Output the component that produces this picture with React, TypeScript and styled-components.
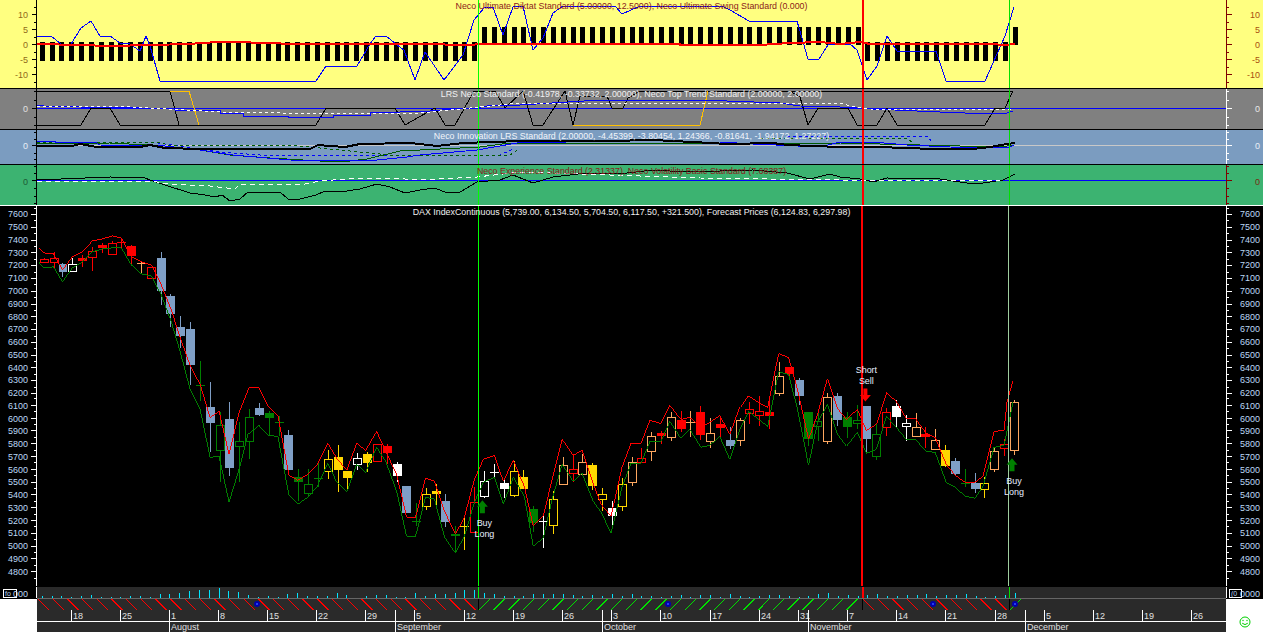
import React from "react";
import styled, { createGlobalStyle } from "styled-components";

const GlobalStyle = createGlobalStyle`
  html, body {
    margin: 0;
    padding: 0;
    background: #000;
    overflow: hidden;
  }
  svg text {
    font-family: "Liberation Sans", Arial, sans-serif;
    font-size: 9px;
  }
`;

const Page = styled.div`
  display: flex;
  flex-direction: column;
  width: 1263px;
  height: 632px;
  font-family: "Liberation Sans", Arial, sans-serif;
`;

const Pane = styled.section<{ $height: number; $bg: string; $edge: string }>`
  display: grid;
  grid-template-columns: 37px 1fr 37px;
  height: ${({ $height }) => $height}px;
  box-sizing: border-box;
  flex: none;
  background: ${({ $bg }) => $bg};
  border-bottom: 1px solid ${({ $edge }) => $edge};
`;

const Plot = styled.div`
  position: relative;
  min-width: 0;
  overflow: hidden;
`;

const Title = styled.div<{ $color: string; $top: number }>`
  position: absolute;
  top: ${({ $top }) => $top}px;
  left: 0;
  right: 0;
  text-align: center;
  font-size: 8.85px;
  line-height: 11px;
  white-space: nowrap;
  color: ${({ $color }) => $color};
`;

const Drawing = styled.svg`
  display: block;
  width: 100%;
  height: 100%;
`;

const Timeline = styled.section`
  display: grid;
  grid-template-columns: 37px 1fr 37px;
  grid-template-rows: 12px 11px 12px 10px;
  flex: none;
  background: #2a2a2a;
`;

const BlackCell = styled.div<{ $col: number }>`
  grid-column: ${({ $col }) => $col};
  grid-row: 1;
  background: #000;
`;

const WhiteCorner = styled.div<{ $col: number }>`
  grid-column: ${({ $col }) => $col};
  grid-row: 2 / span 3;
  background: #fff;
  display: flex;
  align-items: flex-end;
  justify-content: center;
  padding-bottom: 4px;
  box-sizing: border-box;
`;

const Strip = styled.div<{ $row: number; $line?: string }>`
  grid-column: 2;
  grid-row: ${({ $row }) => $row};
  min-width: 0;
  box-sizing: border-box;
  border-bottom: ${({ $line }) => ($line ? `1px solid ${$line}` : "none")};
`;

const TinyText = styled.text`
  && {
    font-size: 7px;
  }
`;

const LEFT = 37;
const PLOT_W = 1189;
const barX = (i: number) => Math.round(41.7 + 9.83 * i) + 0.5;

type Pt = [number, number];

const pts = (list: Pt[]) => list.map((p) => p.join(",")).join(" ");

const Trace = ({
  points,
  color,
  width = 1,
  dash,
}: {
  points: Pt[];
  color: string;
  width?: number;
  dash?: string;
}) => (
  <polyline
    points={pts(points)}
    fill="none"
    stroke={color}
    strokeWidth={width}
    strokeDasharray={dash}
    shapeRendering="crispEdges"
  />
);

const Markers = ({ top, bottom, late = "#00e000" }: { top: number; bottom: number; late?: string }) => (
  <g shapeRendering="crispEdges">
    <line x1={478.5} x2={478.5} y1={top} y2={bottom} stroke="#00ff00" />
    <line x1={863} x2={863} y1={top} y2={bottom} stroke="#ff0000" strokeWidth={2} />
    <line x1={1009.5} x2={1009.5} y1={top} y2={bottom} stroke={late} />
  </g>
);

type AxisProps = {
  side: "left" | "right";
  top: number;
  height: number;
  color: string;
  labelColor: string;
  labels: { y: number; text: string }[];
  ticks: { y: number; major?: boolean }[];
};

const Axis = ({ side, top, height, color, labelColor, labels, ticks }: AxisProps) => {
  const left = side === "left";
  const lineX = left ? 36.5 : 1226.5;
  const dir = left ? -1 : 1;
  const minX = left ? 0 : 1226;
  return (
    <Drawing viewBox={`${minX} ${top} 37 ${height}`}>
      <g shapeRendering="crispEdges" stroke={color}>
        <line x1={lineX} x2={lineX} y1={top} y2={top + height} />
        {ticks.map((t) => (
          <line
            key={t.y}
            x1={lineX}
            x2={lineX + dir * (t.major ? 5 : 2.5)}
            y1={Math.round(t.y) + 0.5}
            y2={Math.round(t.y) + 0.5}
          />
        ))}
      </g>
      {labels.map((l) => (
        <text
          key={l.text}
          x={left ? 28 : 1260}
          y={l.y + 3.5}
          textAnchor="end"
          fill={labelColor}
        >
          {l.text}
        </text>
      ))}
    </Drawing>
  );
};

// yellow pane
const yellowLabels = [
  { y: 14, text: "10" },
  { y: 29, text: "5" },
  { y: 44, text: "0" },
  { y: 59, text: "-5" },
  { y: 74, text: "-10" },
];
const yellowTicks = Array.from({ length: 12 }, (_, i) => ({ y: 6.5 + i * 7.5, major: i % 2 === 1 }));

const swing: Pt[] = [
  [37, 36], [51, 36], [61, 44], [71, 44], [81, 28], [91, 21], [100, 36], [110, 36], [120, 43],
  [130, 44], [140, 51], [146, 36], [150, 46], [160, 81], [316, 81], [326, 66], [357, 66], [370, 44],
  [376, 36], [386, 36], [396, 44], [404, 50], [415, 80], [425, 52], [444, 80], [463, 55], [474, 20],
  [484, 8], [493, 7], [503, 35], [513, 7], [523, 6], [533, 50], [543, 38], [553, 13], [563, 6],
  [615, 6], [622, 14], [640, 6], [722, 6], [730, 10], [749, 21], [797, 21], [808, 59], [819, 59],
  [828, 45], [850, 44], [857, 50], [867, 80], [877, 66], [887, 36], [897, 51], [936, 51], [946, 81],
  [985, 81], [1005, 36], [1014, 7],
];
const diktat: Pt[] = [
  [37, 44], [80, 45], [110, 46], [150, 45], [190, 44], [200, 43], [220, 42], [240, 42], [262, 43],
  [300, 44], [420, 44], [470, 45], [480, 44], [680, 44], [680, 45], [700, 45], [760, 45], [790, 43],
  [820, 42], [840, 44], [860, 42], [870, 44], [990, 44], [1005, 45], [1015, 44],
];

// grey pane
const grayLabels = [{ y: 108.5, text: "0" }];
const grayTicks = [
  { y: 91 }, { y: 100 }, { y: 108, major: true }, { y: 117 }, { y: 125 },
];
const topTrendA: Pt[] = [
  [37, 125], [81, 125], [91, 108], [110, 108], [120, 125], [316, 125], [326, 108], [395, 108],
  [405, 125], [435, 108], [445, 125], [455, 125], [474, 91], [495, 91], [505, 108], [523, 91],
  [533, 125], [543, 125], [565, 91], [573, 125], [580, 96], [607, 96], [612, 108], [623, 108],
  [628, 98], [640, 91], [708, 91], [790, 91], [800, 97], [808, 125], [818, 108], [848, 108],
  [857, 125], [877, 125], [887, 108], [897, 125], [985, 125], [995, 108], [1005, 108], [1013, 91],
];
const topTrendB: Pt[] = [[37, 91], [170, 91], [179, 125]];
const topTrendC: Pt[] = [[708, 91], [1013, 91]];
const topGold: Pt[] = [[170, 91], [189, 91], [199, 125]];
const topGold2: Pt[] = [[573, 125], [700, 125], [708, 91]];
const lrsBlue: Pt[] = [
  [37, 105], [44, 106], [80, 107], [140, 108], [174, 108], [175, 110], [220, 110], [220, 113],
  [243, 113], [243, 116], [288, 116], [288, 117], [333, 117], [333, 115], [370, 115], [370, 113],
  [430, 111], [455, 109], [475, 108], [487, 106], [520, 105], [600, 100], [700, 100], [780, 103],
  [800, 106], [840, 107], [873, 109], [917, 111], [940, 112], [965, 113], [1007, 113], [1013, 111],
];
const lrsDash: Pt[] = [
  [37, 106], [130, 107], [150, 108], [220, 112], [280, 113], [420, 113], [470, 108], [520, 103],
  [800, 103], [840, 103], [850, 106], [870, 109], [1013, 110],
];

// blue pane
const blueLabels = [{ y: 145.5, text: "0" }];
const blueTicks = [{ y: 132 }, { y: 139 }, { y: 145, major: true }, { y: 153 }, { y: 159 }];
const innoBlack: Pt[] = [
  [37, 146], [72, 146], [80, 144], [97, 147], [140, 147], [150, 145], [165, 148], [200, 149],
  [310, 149], [318, 145], [330, 146], [345, 147], [360, 144], [410, 143], [420, 144], [437, 146],
  [463, 143], [520, 141], [607, 141], [653, 140], [693, 142], [727, 144], [773, 143], [787, 145],
  [840, 147], [873, 147], [910, 148], [930, 149], [973, 149], [990, 147], [1007, 144], [1015, 143],
];
const innoBlue: Pt[] = [
  [37, 141], [55, 141], [55, 142], [95, 142], [100, 145], [165, 146], [200, 150], [233, 155],
  [290, 160], [367, 161], [407, 157], [420, 155], [477, 150], [517, 143], [567, 142], [720, 142],
  [753, 144], [820, 147], [840, 142], [873, 142], [907, 145], [950, 147], [1007, 148], [1014, 145],
];
const innoGreen: Pt[] = [
  [37, 144], [110, 143], [165, 146], [200, 150], [230, 155], [270, 158], [320, 161], [350, 161],
  [367, 159], [400, 151], [420, 150], [480, 147], [510, 143], [560, 143], [700, 143], [840, 143],
  [1000, 147], [1014, 145],
];
const innoDashBlue: Pt[] = [
  [37, 143], [150, 142], [165, 144], [200, 149], [220, 152], [260, 155], [500, 155], [515, 148],
];
const innoDashBlue2: Pt[] = [[787, 136], [927, 136], [933, 143]];
const innoDashGreen: Pt[] = [
  [37, 142], [160, 142], [167, 145], [300, 146], [350, 151], [400, 156], [510, 155], [520, 148],
];
const innoDashGreen2: Pt[] = [[760, 138], [907, 138], [913, 143]];

// green pane
const greenLabels = [{ y: 181, text: "0" }];
const greenTicks = [
  { y: 166 }, { y: 173 }, { y: 180, major: true }, { y: 188 }, { y: 196 }, { y: 203 },
];
const experience: Pt[] = [
  [37, 180], [85, 178], [110, 177], [145, 178], [150, 180], [165, 185], [190, 193], [205, 195],
  [215, 197], [222, 195], [230, 201], [240, 199], [248, 192], [280, 192], [288, 199], [300, 199],
  [316, 195], [325, 191], [340, 192], [360, 189], [377, 184], [390, 187], [405, 193], [420, 190],
  [435, 188], [447, 193], [460, 192], [477, 182], [500, 180], [513, 175], [533, 183], [553, 177],
  [587, 173], [627, 173], [653, 170], [687, 172], [753, 170], [787, 173], [810, 179], [830, 174],
  [840, 177], [860, 179], [873, 182], [887, 178], [940, 179], [967, 183], [983, 183], [1003, 180],
  [1015, 174],
];
const volDash: Pt[] = [
  [37, 181], [150, 181], [170, 184], [210, 186], [235, 189], [240, 184], [300, 185], [320, 181],
  [360, 178], [390, 178], [420, 180], [477, 177], [520, 172], [700, 178], [840, 180], [1000, 181],
];

// main pane
const priceLabels = Array.from({ length: 29 }, (_, i) => ({
  y: 214 + i * 12.79,
  text: String(7600 - i * 100),
}));
const priceTicks = Array.from({ length: 59 }, (_, i) => ({
  y: 207.6 + i * 6.395,
  major: i % 2 === 1,
}));

// high, low, body top, body bottom, kind (capital = filled)
type Candle = [number, number, number, number, string];
const candles: Candle[] = [
  [258, 263, 259, 262, "r"], [252, 268, 258, 262, "r"], [263, 277, 264, 272, "B"], [258, 271, 264, 271, "w"],
  [255, 267, 258, 261, "R"], [247, 271, 251, 257, "r"], [243, 253, 245, 248, "R"], [241, 255, 243, 254, "r"],
  [238, 248, 242, 243, "R"], [245, 265, 246, 256, "R"], [262, 274, 263, 264, "O"], [267, 279, 267, 278, "r"],
  [252, 305, 258, 291, "B"], [294, 327, 296, 314, "B"], [316, 348, 327, 336, "B"], [322, 385, 329, 365, "B"],
  [361, 402, 385, 386, "G"], [382, 453, 408, 424, "B"], [413, 483, 426, 451, "g"], [403, 477, 420, 469, "B"],
  [423, 483, 442, 447, "g"], [410, 460, 418, 442, "g"], [404, 417, 409, 416, "B"], [412, 437, 414, 419, "G"],
  [417, 437, 423, 424, "G"], [431, 471, 436, 471, "B"], [470, 502, 478, 483, "G"], [470, 497, 485, 494, "g"],
  [464, 488, 479, 480, "G"], [451, 480, 460, 472, "y"], [446, 493, 458, 471, "Y"], [472, 492, 472, 479, "Y"],
  [454, 471, 459, 465, "w"], [453, 473, 455, 464, "Y"], [445, 462, 445, 462, "r"], [445, 465, 447, 454, "R"],
  [463, 483, 465, 477, "W"], [487, 514, 487, 514, "B"], [504, 527, 522, 523, "G"], [489, 511, 495, 507, "y"],
  [485, 506, 492, 495, "Y"], [495, 528, 502, 523, "B"], [527, 553, 535, 537, "G"], [518, 551, 527, 528, "Y"],
  [488, 533, 503, 533, "r"], [472, 499, 482, 497, "w"], [465, 478, 473, 474, "W"], [481, 499, 484, 490, "W"],
  [462, 498, 472, 496, "y"], [471, 490, 478, 490, "Y"], [507, 533, 510, 524, "G"], [517, 549, 522, 523, "W"],
  [492, 535, 500, 526, "y"], [458, 485, 466, 485, "o"], [455, 483, 470, 474, "r"], [455, 475, 463, 475, "o"],
  [464, 491, 466, 487, "Y"], [489, 512, 495, 500, "y"], [502, 529, 509, 517, "W"], [479, 512, 485, 507, "y"],
  [458, 487, 463, 483, "o"], [449, 463, 459, 463, "r"], [433, 462, 437, 452, "o"], [432, 445, 434, 437, "R"],
  [413, 442, 418, 438, "o"], [412, 433, 421, 430, "R"], [412, 438, 423, 424, "O"], [407, 441, 413, 436, "R"],
  [419, 449, 434, 442, "o"], [417, 438, 425, 429, "R"], [428, 450, 441, 447, "B"], [419, 447, 421, 441, "o"],
  [403, 425, 410, 414, "r"], [397, 427, 412, 416, "r"], [398, 430, 413, 417, "R"], [362, 396, 376, 393, "o"],
  [367, 378, 367, 374, "R"], [378, 406, 380, 397, "B"], [413, 447, 413, 440, "G"], [413, 442, 422, 427, "g"],
  [393, 445, 398, 442, "o"], [393, 427, 396, 421, "B"], [413, 439, 418, 428, "G"], [406, 430, 421, 424, "g"],
  [407, 453, 407, 440, "B"], [425, 461, 435, 457, "g"], [409, 437, 413, 428, "r"], [401, 428, 407, 418, "W"],
  [416, 442, 424, 427, "w"], [414, 438, 428, 437, "o"], [428, 449, 435, 438, "R"], [430, 450, 441, 450, "o"],
  [446, 468, 451, 467, "Y"], [459, 477, 462, 475, "B"], [470, 488, 484, 485, "G"], [474, 494, 484, 490, "B"],
  [478, 499, 484, 490, "y"], [448, 473, 452, 470, "o"], [440, 457, 445, 449, "r"], [401, 456, 403, 451, "o"],
];

const candleColors: Record<string, string> = {
  r: "#ff0000",
  g: "#008000",
  b: "#7f9fc6",
  w: "#ffffff",
  y: "#ffd700",
  o: "#ffa860",
};

const upperBand: Pt[] = [
  [37, 248], [42, 253], [52, 254], [61, 270], [71, 257], [81, 252], [91, 241], [101, 239], [111, 236],
  [120, 238], [130, 257], [140, 262], [150, 265], [160, 285], [170, 310], [179, 338], [189, 366], [199, 385],
  [209, 418], [218, 412], [228, 455], [238, 413], [248, 388], [258, 388], [267, 406], [277, 416], [288, 476],
  [297, 481], [307, 475], [316, 466], [327, 444], [336, 459], [346, 471], [356, 444], [365, 451], [376, 432],
  [385, 452], [396, 475], [406, 518], [415, 518], [425, 479], [434, 482], [444, 512], [455, 535], [464, 518],
  [474, 480], [483, 460], [494, 456], [503, 482], [513, 461], [524, 487], [533, 527], [543, 517], [552, 480],
  [562, 440], [573, 456], [582, 451], [593, 484], [601, 505], [611, 517], [622, 468], [631, 444], [641, 444],
  [650, 421], [661, 424], [670, 406], [681, 420], [690, 418], [701, 428], [710, 423], [720, 416], [730, 435],
  [740, 408], [748, 396], [759, 403], [768, 408], [779, 354], [789, 358], [798, 390], [809, 440], [818, 415],
  [828, 379], [838, 409], [847, 420], [858, 410], [867, 431], [877, 425], [887, 393], [897, 402], [907, 419],
  [916, 419], [927, 434], [936, 438], [947, 465], [956, 476], [966, 483], [976, 483], [984, 477], [995, 432],
  [1005, 431], [1008, 403], [1014, 381],
];
const lowerBand: Pt[] = [
  [37, 262], [42, 268], [52, 267], [61, 282], [71, 268], [81, 262], [91, 252], [101, 249], [111, 248],
  [120, 248], [130, 265], [140, 274], [150, 276], [160, 295], [170, 322], [179, 352], [189, 390], [199, 410],
  [209, 458], [218, 457], [228, 503], [238, 470], [247, 435], [258, 426], [267, 436], [277, 437], [288, 496],
  [297, 505], [307, 498], [316, 488], [327, 464], [336, 483], [346, 493], [356, 465], [365, 473], [376, 448],
  [385, 462], [396, 492], [406, 537], [415, 537], [425, 498], [434, 500], [444, 538], [455, 554], [464, 537],
  [474, 503], [483, 483], [494, 478], [503, 505], [513, 478], [524, 497], [533, 547], [543, 539], [552, 500],
  [562, 465], [573, 482], [582, 474], [593, 502], [601, 513], [611, 534], [622, 488], [631, 464], [641, 464],
  [650, 442], [661, 442], [670, 422], [681, 439], [690, 430], [701, 448], [710, 446], [720, 437], [730, 460],
  [740, 430], [749, 412], [759, 420], [768, 427], [779, 372], [789, 375], [798, 410], [809, 466], [818, 423],
  [828, 405], [838, 435], [847, 447], [858, 433], [867, 454], [877, 450], [887, 417], [897, 428], [907, 440],
  [916, 440], [927, 452], [936, 453], [947, 483], [956, 488], [966, 497], [976, 499], [984, 487], [995, 448],
  [1005, 446], [1014, 403],
];

const CandleMark = ({ candle, index }: { candle: Candle; index: number }) => {
  const [high, low, top, bottom, kind] = candle;
  const x = barX(index);
  const color = candleColors[kind.toLowerCase()];
  const filled = kind !== kind.toLowerCase();
  return (
    <g shapeRendering="crispEdges">
      <line x1={x} x2={x} y1={high} y2={low} stroke={color} />
      {filled ? (
        <rect x={x - 4.5} y={top} width={9} height={bottom - top} fill={color} />
      ) : (
        <rect x={x - 4} y={top + 0.5} width={8} height={bottom - top} fill="#000" stroke={color} />
      )}
    </g>
  );
};

const signalText = "#e6eeff";

const Signal = ({ x, y, lines }: { x: number; y: number; lines: string[] }) => (
  <g fill={signalText} textAnchor="middle">
    {lines.map((line, i) => (
      <text key={line} x={x} y={y + i * 11}>
        {line}
      </text>
    ))}
  </g>
);

const UpArrow = ({ x, y }: { x: number; y: number }) => (
  <polygon
    points={`${x},${y} ${x + 5.5},${y + 6.5} ${x + 2.5},${y + 6.5} ${x + 2.5},${y + 13} ${x - 2.5},${y + 13} ${x - 2.5},${y + 6.5} ${x - 5.5},${y + 6.5}`}
    fill="#008000"
  />
);

const DownArrow = ({ x, y }: { x: number; y: number }) => (
  <polygon
    points={`${x},${y} ${x + 5.5},${y - 6.5} ${x + 2},${y - 6.5} ${x + 2},${y - 13} ${x - 2},${y - 13} ${x - 2},${y - 6.5} ${x - 5.5},${y - 6.5}`}
    fill="#ff0000"
  />
);

// timeline
const volumes = [
  2, 2, 2, 1, 2, 3, 1, 1, 1, 2, 2, 1, 4, 4, 5, 7, 8, 8, 10, 7, 6, 3, 1, 2, 1, 4, 5, 2, 2, 2, 5, 3, 0, 2, 3, 3, 1, 1, 5,
  2, 4, 4, 5, 8, 8, 5, 4, 2, 2, 2, 4, 4, 4, 4, 3, 2, 3, 2, 4, 2, 4, 2, 2, 1, 2, 3, 1, 3, 3, 1, 4, 2, 1, 2, 3, 3, 2, 1, 2, 4, 5, 2,
  3, 2, 3, 4, 2, 2, 3, 3, 4, 2, 3, 3, 4, 2, 1, 2, 3, 5,
];

const dateTicks: [number, string][] = [
  [71, "18"], [120, "25"], [169, "1"], [218, "8"], [267, "15"], [316, "22"], [365, "29"], [414, "5"],
  [464, "12"], [513, "19"], [562, "26"], [611, "3"], [660, "10"], [710, "17"], [759, "24"], [798, "31"],
  [847, "7"], [896, "14"], [945, "21"], [995, "28"], [1044, "5"], [1093, "12"], [1142, "19"], [1191, "26"],
];
const dateMonthEdges = [395, 602, 808, 1025];
const monthTicks: [number, string][] = [
  [169, "August"], [395, "September"], [602, "October"], [808, "November"], [1025, "December"],
];

const hatchRuns: { from: number; to: number; color: string; back: boolean }[] = [
  { from: 37, to: 478, color: "#ff0000", back: true },
  { from: 478, to: 862, color: "#00e000", back: false },
  { from: 862, to: 1009, color: "#ff0000", back: true },
  { from: 1009, to: 1025, color: "#00e000", back: false },
];

const Hatch = () => (
  <Drawing viewBox={`${LEFT} 599 ${PLOT_W} 11`}>
    {hatchRuns.map((run) => {
      const lines = [];
      for (let x = run.from + 1; x + 11 <= run.to; x += 14.7) {
        lines.push(
          <line
            key={x}
            x1={x}
            x2={x + 11}
            y1={run.back ? 599 : 610}
            y2={run.back ? 610 : 599}
            stroke={run.color}
            shapeRendering="crispEdges"
          />
        );
      }
      return <g key={run.from}>{lines}</g>;
    })}
    <g shapeRendering="crispEdges" stroke="#000">
      <line x1={478.5} x2={478.5} y1={599} y2={610} />
      <line x1={862.5} x2={862.5} y1={599} y2={610} />
      <line x1={1009.5} x2={1009.5} y1={599} y2={610} />
    </g>
    {[257, 668, 933, 1015].map((x) => (
      <g key={x}>
        <circle cx={x} cy={604} r={3} fill="#0000b0" />
        <circle cx={x} cy={604} r={1} fill="#3050ff" />
      </g>
    ))}
  </Drawing>
);

const Smiley = () => (
  <svg width="12" height="12" viewBox="0 0 12 12">
    <circle cx="6" cy="6" r="5" fill="none" stroke="#00d000" />
    <circle cx="4" cy="4.5" r="0.7" fill="#00d000" />
    <circle cx="8" cy="4.5" r="0.7" fill="#00d000" />
    <path d="M3.2 7.2 Q6 10 8.8 7.2" fill="none" stroke="#00d000" />
  </svg>
);

export default function App() {
  return (
    <Page>
      <GlobalStyle />

      <Pane $height={89} $bg="#ffff80" $edge="#000">
        <Axis side="left" top={0} height={88} color="#000" labelColor="#8f6a1a" labels={yellowLabels} ticks={yellowTicks} />
        <Plot>
          <Drawing viewBox={`${LEFT} 0 ${PLOT_W} 88`}>
            {Array.from({ length: 100 }, (_, i) => {
              const up = (i > 44 && i < 84) || i === 99;
              return (
                <rect
                  key={i}
                  x={barX(i) - 2.5}
                  y={up ? 27 : 42}
                  width={5}
                  height={up ? 18 : 19}
                  fill="#000"
                  shapeRendering="crispEdges"
                />
              );
            })}
            <Trace points={swing} color="#0000ff" />
            <Trace points={diktat} color="#ff0000" width={2} />
            <Markers top={0} bottom={88} />
          </Drawing>
          <Title $color="#8b1a1a" $top={1}>
            Neco Ultimate Diktat Standard (5.00000, 12.5000), Neco Ultimate Swing Standard (0.000)
          </Title>
        </Plot>
        <Axis side="right" top={0} height={88} color="#800000" labelColor="#a8500f" labels={yellowLabels} ticks={yellowTicks} />
      </Pane>

      <Pane $height={41} $bg="#808080" $edge="#000">
        <Axis side="left" top={89} height={40} color="#000" labelColor="#e0e0e0" labels={grayLabels} ticks={grayTicks} />
        <Plot>
          <Drawing viewBox={`${LEFT} 89 ${PLOT_W} 40`}>
            <Trace points={[[37, 108], [1226, 108]]} color="#0000ff" />
            <Trace points={topTrendB} color="#000" />
            <Trace points={topTrendA} color="#000" />
            <Trace points={topTrendC} color="#000" />
            <Trace points={topGold} color="#ffc000" />
            <Trace points={topGold2} color="#ffc000" />
            <Trace points={lrsBlue} color="#0000ff" />
            <Trace points={lrsDash} color="#fff" dash="3 3" />
            <Markers top={89} bottom={129} />
          </Drawing>
          <Title $color="#f2f2f2" $top={0}>
            LRS Neco Standard (-0.41978, -0.33732, 2.00000), Neco Top Trend Standard (2.00000, 2.00000)
          </Title>
        </Plot>
        <Axis side="right" top={89} height={40} color="#fff" labelColor="#e8e8e8" labels={grayLabels} ticks={grayTicks} />
      </Pane>

      <Pane $height={35} $bg="#7b9cc0" $edge="#000">
        <Axis side="left" top={130} height={34} color="#000" labelColor="#e8eef5" labels={blueLabels} ticks={blueTicks} />
        <Plot>
          <Drawing viewBox={`${LEFT} 130 ${PLOT_W} 34`}>
            <Trace points={[[37, 145], [1226, 145]]} color="#c8c8c8" />
            <Trace points={innoDashBlue} color="#0000ff" dash="3 3" />
            <Trace points={innoDashBlue2} color="#0000ff" dash="3 3" />
            <Trace points={innoDashGreen} color="#005a00" dash="3 3" />
            <Trace points={innoDashGreen2} color="#005a00" dash="3 3" />
            <Trace points={innoGreen} color="#005a00" />
            <Trace points={innoBlue} color="#0000ff" />
            <Trace points={innoBlack} color="#000" width={2} />
            <Markers top={130} bottom={164} />
          </Drawing>
          <Title $color="#f2f5fa" $top={1}>
            Neco Innovation LRS Standard (2.00000, -4.45399, -3.80454, 1.24366, -0.81641, -1.94172, 1.27227)
          </Title>
        </Plot>
        <Axis side="right" top={130} height={34} color="#fff" labelColor="#e8eef5" labels={blueLabels} ticks={blueTicks} />
      </Pane>

      <Pane $height={41} $bg="#3cb371" $edge="#fff">
        <Axis side="left" top={165} height={40} color="#000" labelColor="#1c5a35" labels={greenLabels} ticks={greenTicks} />
        <Plot>
          <Drawing viewBox={`${LEFT} 165 ${PLOT_W} 40`}>
            <Trace points={[[37, 180], [1226, 180]]} color="#0000ff" />
            <Trace points={experience} color="#000" />
            <Trace points={volDash} color="#fff" dash="5 4" />
            <Markers top={165} bottom={205} />
          </Drawing>
          <Title $color="#8b1a1a" $top={1}>
            Neco Experience Standard (2.31337), Neco Volatility Basic Standard (7.68387)
          </Title>
        </Plot>
        <Axis side="right" top={165} height={40} color="#800000" labelColor="#7a2a10" labels={greenLabels} ticks={greenTicks} />
      </Pane>

      <Pane $height={381} $bg="#000" $edge="#000">
        <Axis side="left" top={206} height={381} color="#fff" labelColor="#bcd8f5" labels={priceLabels} ticks={priceTicks} />
        <Plot>
          <Drawing viewBox={`${LEFT} 206 ${PLOT_W} 381`}>
            {candles.map((candle, i) => (
              <CandleMark key={i} candle={candle} index={i} />
            ))}
            <Trace points={lowerBand} color="#008000" />
            <Trace points={upperBand} color="#ff0000" />
            <Markers top={206} bottom={587} late="#a0cfa0" />
            <UpArrow x={482} y={501} />
            <UpArrow x={1013} y={459} />
            <DownArrow x={866} y={402} />
            <Signal x={484} y={527} lines={["Buy", "Long"]} />
            <Signal x={867} y={373} lines={["Short", "Sell"]} />
            <Signal x={1015} y={485} lines={["Buy", "Long"]} />
          </Drawing>
          <Title $color="#f0f0f0" $top={1}>
            DAX IndexContinuous (5,739.00, 6,134.50, 5,704.50, 6,117.50, +321.500), Forecast Prices (6,124.83, 6,297.98)
          </Title>
        </Plot>
        <Axis side="right" top={206} height={381} color="#fff" labelColor="#bcd8f5" labels={priceLabels} ticks={priceTicks} />
      </Pane>

      <Timeline>
        <BlackCell $col={1}>
          <Drawing viewBox="0 587 37 12">
            <rect x={3.5} y={589.5} width={13} height={8} fill="none" stroke="#fff" shapeRendering="crispEdges" />
            <TinyText x={5} y={596} fill="#bcd8f5">fo</TinyText>
            <text x={28} y={597} fill="#bcd8f5" textAnchor="end">000</text>
            <line x1={36.5} x2={36.5} y1={587} y2={598} stroke="#fff" shapeRendering="crispEdges" />
          </Drawing>
        </BlackCell>
        <Strip $row={1} $line="#666">
          <Drawing viewBox={`${LEFT} 587 ${PLOT_W} 11`}>
            {volumes.map((h, i) => (
              <rect
                key={i}
                x={barX(i) - 0.5}
                y={598 - h}
                width={1}
                height={h}
                fill="#00e5ff"
                shapeRendering="crispEdges"
              />
            ))}
            <Markers top={587} bottom={598} late="#00e000" />
          </Drawing>
        </Strip>
        <BlackCell $col={3}>
          <Drawing viewBox="1226 587 37 12">
            <rect x={1229.5} y={589.5} width={12} height={8} fill="none" stroke="#fff" shapeRendering="crispEdges" />
            <TinyText x={1231} y={596} fill="#bcd8f5">(0</TinyText>
            <text x={1260} y={597} fill="#bcd8f5" textAnchor="end">0000</text>
            <line x1={1226.5} x2={1226.5} y1={587} y2={598} stroke="#fff" shapeRendering="crispEdges" />
          </Drawing>
        </BlackCell>

        <WhiteCorner $col={1} />
        <Strip $row={2}>
          <Hatch />
        </Strip>
        <WhiteCorner $col={3}>
          <Smiley />
        </WhiteCorner>

        <Strip $row={3} $line="#fff">
          <Drawing viewBox={`${LEFT} 610 ${PLOT_W} 11`}>
            {dateTicks.map(([x, label]) => (
              <g key={x}>
                <line x1={x + 0.5} x2={x + 0.5} y1={610} y2={621} stroke="#fff" shapeRendering="crispEdges" />
                <text x={x + 2} y={619} fill="#e0e0e0">{label}</text>
              </g>
            ))}
            {dateMonthEdges.map((x) => (
              <line key={x} x1={x + 0.5} x2={x + 0.5} y1={610} y2={621} stroke="#fff" shapeRendering="crispEdges" />
            ))}
          </Drawing>
        </Strip>
        <Strip $row={4}>
          <Drawing viewBox={`${LEFT} 622 ${PLOT_W} 10`}>
            {monthTicks.map(([x, label]) => (
              <g key={x}>
                <line x1={x + 0.5} x2={x + 0.5} y1={622} y2={632} stroke="#fff" shapeRendering="crispEdges" />
                <text x={x + 2} y={630} fill="#e0e0e0">{label}</text>
              </g>
            ))}
          </Drawing>
        </Strip>
      </Timeline>
    </Page>
  );
}
